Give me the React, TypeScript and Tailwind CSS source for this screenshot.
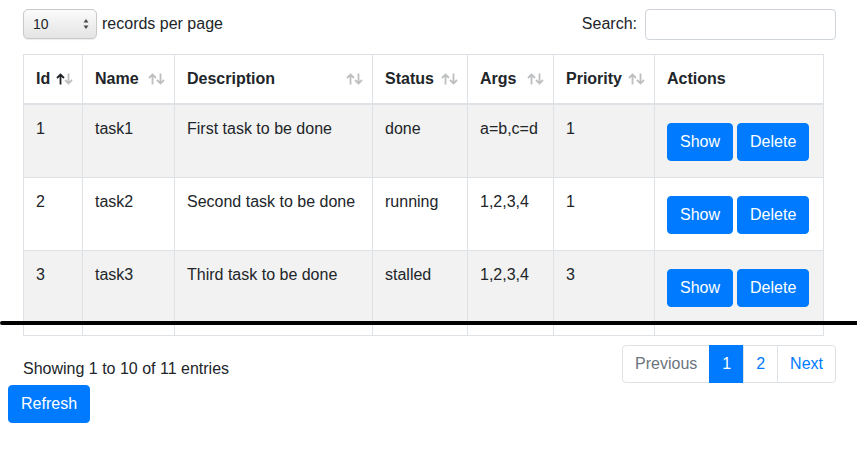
import clsx from 'clsx';

interface Task {
  id: number;
  name: string;
  description: string;
  status: string;
  args: string;
  priority: number;
}

const tasks: Task[] = [
  { id: 1, name: 'task1', description: 'First task to be done', status: 'done', args: 'a=b,c=d', priority: 1 },
  { id: 2, name: 'task2', description: 'Second task to be done', status: 'running', args: '1,2,3,4', priority: 1 },
  { id: 3, name: 'task3', description: 'Third task to be done', status: 'stalled', args: '1,2,3,4', priority: 3 },
];

const columns = [
  { label: 'Id', width: 'w-[59px]', sortable: true, active: true },
  { label: 'Name', width: 'w-[92px]', sortable: true },
  { label: 'Description', width: 'w-[198px]', sortable: true },
  { label: 'Status', width: 'w-[95px]', sortable: true },
  { label: 'Args', width: 'w-[86px]', sortable: true },
  { label: 'Priority', width: 'w-[101px]', sortable: true },
  { label: 'Actions', width: 'w-[169px]', sortable: false },
];

function Arrow({ up, className }: { up?: boolean; className?: string }) {
  return (
    <svg width="9" height="12" viewBox="0 0 9 12" fill="none" stroke="currentColor" strokeWidth="1.8" className={className}>
      {up ? (
        <path d="M4.5 11.5V1.5M1 5L4.5 1.5L8 5" />
      ) : (
        <path d="M4.5 0.5V10.5M1 7L4.5 10.5L8 7" />
      )}
    </svg>
  );
}

function SortHeader({ label, width, sortable, active }: { label: string; width: string; sortable: boolean; active?: boolean }) {
  return (
    <th
      className={clsx(
        'relative border border-b-2 border-[#dee2e6] pl-3 pt-3 pb-[12px] text-left font-bold leading-6',
        sortable ? 'pr-[30px]' : 'pr-3',
        width
      )}
    >
      {label}
      {sortable && (
        <>
          {/* sort arrows, like DataTables' :before / :after */}
          <Arrow up className={clsx('absolute top-[18px] right-[17px]', active ? 'text-[#212529]' : 'text-[#bdbfc1]')} />
          <Arrow className="absolute top-[18px] right-[9px] text-[#bdbfc1]" />
        </>
      )}
    </th>
  );
}

export default function App() {
  return (
    <div className="relative min-h-[457px] bg-white p-2 text-base leading-6 text-[#212529] font-['Liberation_Sans',Arial,sans-serif]">
      <div className="pl-[15px] pr-[13px]">
        {/* Length + search controls */}
        <div className="flex h-[32px] items-center justify-between">
          <div className="flex items-center gap-[5px]">
            <div className="flex h-[30px] w-[74px] items-center justify-between rounded-[5px] border border-[#c9c9c9] bg-gradient-to-b from-[#fbfbfb] to-[#e4e4e4] pl-[9px] pr-[7px] shadow-[0_1px_1px_rgba(0,0,0,0.08)]">
              <span className="text-[14px] leading-none">10</span>
              <svg width="6" height="12" viewBox="0 0 6 12" className="text-[#4a4a4a]">
                <path d="M3 1 L5.5 4.5 L0.5 4.5 Z" fill="currentColor" />
                <path d="M3 11 L5.5 7.5 L0.5 7.5 Z" fill="currentColor" />
              </svg>
            </div>
            <span>records per page</span>
          </div>
          <label className="flex items-center gap-2">
            <span>Search:</span>
            <input className="h-[31px] w-[191px] rounded border border-[#ced4da] bg-white px-2 text-sm outline-none" />
          </label>
        </div>

        {/* Table */}
        <table className="mt-[14px] w-[800px] table-fixed border-collapse border border-[#dee2e6]">
          <thead>
            <tr>
              {columns.map(col => (
                <SortHeader key={col.label} {...col} />
              ))}
            </tr>
          </thead>
          <tbody>
            {tasks.map((task, i) => (
              <tr key={task.id} className={i % 2 === 0 ? 'bg-[#f2f2f2]' : 'bg-white'}>
                <td className="h-[73px] border border-[#dee2e6] px-3 pt-3 align-top">{task.id}</td>
                <td className="border border-[#dee2e6] px-3 pt-3 align-top">{task.name}</td>
                <td className="border border-[#dee2e6] px-3 pt-3 align-top">{task.description}</td>
                <td className="border border-[#dee2e6] px-3 pt-3 align-top">{task.status}</td>
                <td className="border border-[#dee2e6] px-3 pt-3 align-top">{task.args}</td>
                <td className="border border-[#dee2e6] px-3 pt-3 align-top">{task.priority}</td>
                <td className="border border-[#dee2e6] px-3 pt-3 align-top">
                  <div className="mt-[6px] flex gap-1">
                    <button className="h-[38px] rounded border border-[#007bff] bg-[#007bff] px-3 text-white">Show</button>
                    <button className="h-[38px] rounded border border-[#007bff] bg-[#007bff] px-3 text-white">Delete</button>
                  </div>
                </td>
              </tr>
            ))}
            <tr className="bg-white">
              {columns.map(col => (
                <td key={col.label} className="h-[12px] border border-[#dee2e6] p-0" />
              ))}
            </tr>
          </tbody>
        </table>

        {/* Info + pagination */}
        <div className="mt-[6px] flex items-start justify-between">
          <div className="whitespace-nowrap pt-[15px]">Showing 1 to 10 of 11 entries</div>
          <ul className="mt-[3px] mb-[2px] flex leading-5">
            <li className="rounded-l border border-[#dee2e6] bg-white px-3 py-2 text-[#6c757d]">Previous</li>
            <li className="-ml-px border border-[#007bff] bg-[#007bff] px-3 py-2 text-white">1</li>
            <li className="-ml-px border border-[#dee2e6] bg-white px-3 py-2 text-[#007bff]">2</li>
            <li className="-ml-px rounded-r border border-[#dee2e6] bg-white px-3 py-2 text-[#007bff]">Next</li>
          </ul>
        </div>
      </div>

      <button className="h-[38px] rounded border border-[#007bff] bg-[#007bff] px-3 text-white">Refresh</button>

      {/* Cut marker drawn across the screenshot */}
      <div className="absolute left-0 right-0 top-[321px] h-[4px] rounded-l-full bg-black" />
    </div>
  );
}
